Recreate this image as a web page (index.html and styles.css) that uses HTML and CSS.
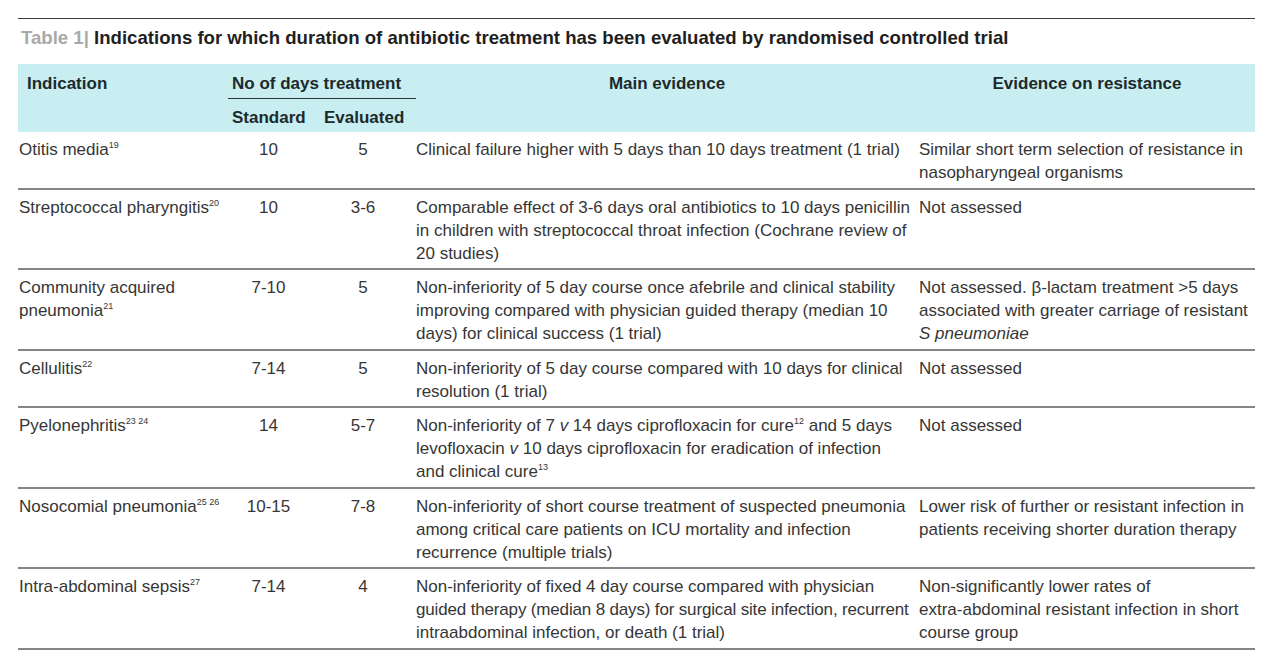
FILE: index.html
```html
<!DOCTYPE html>
<html lang="en">
<head>
<meta charset="utf-8">
<title>Table 1</title>
<link rel="stylesheet" href="styles.css">
</head>
<body>
<div class="page">
  <div class="rule"></div>
  <h1 class="caption"><span class="label">Table 1|</span> Indications for which duration of antibiotic treatment has been evaluated by randomised controlled trial</h1>
  <table class="tbl">
    <colgroup>
      <col class="c1"><col class="c2"><col class="c3"><col class="c4"><col class="c5">
    </colgroup>
    <thead>
      <tr class="h1">
        <th class="ind" rowspan="2">Indication</th>
        <th class="days" colspan="2">No of days treatment</th>
        <th class="main" rowspan="2">Main evidence</th>
        <th class="res" rowspan="2">Evidence on resistance</th>
      </tr>
      <tr class="h2">
        <th class="std">Standard</th>
        <th class="evl">Evaluated</th>
      </tr>
    </thead>
    <tbody>
      <tr>
        <td class="ind">Otitis media<sup>19</sup></td>
        <td class="std">10</td>
        <td class="evl">5</td>
        <td class="main">Clinical failure higher with 5 days than 10 days treatment (1 trial)</td>
        <td class="res">Similar short term selection of resistance in<br>nasopharyngeal organisms</td>
      </tr>
      <tr>
        <td class="ind">Streptococcal pharyngitis<sup>20</sup></td>
        <td class="std">10</td>
        <td class="evl">3-6</td>
        <td class="main">Comparable effect of 3-6 days oral antibiotics to 10 days penicillin<br>in children with streptococcal throat infection (Cochrane review of<br>20 studies)</td>
        <td class="res">Not assessed</td>
      </tr>
      <tr>
        <td class="ind">Community acquired<br>pneumonia<sup>21</sup></td>
        <td class="std">7-10</td>
        <td class="evl">5</td>
        <td class="main">Non-inferiority of 5 day course once afebrile and clinical stability<br>improving compared with physician guided therapy (median 10<br>days) for clinical success (1 trial)</td>
        <td class="res">Not assessed. β-lactam treatment &gt;5 days<br>associated with greater carriage of resistant<br><i>S pneumoniae</i></td>
      </tr>
      <tr>
        <td class="ind">Cellulitis<sup>22</sup></td>
        <td class="std">7-14</td>
        <td class="evl">5</td>
        <td class="main">Non-inferiority of 5 day course compared with 10 days for clinical<br>resolution (1 trial)</td>
        <td class="res">Not assessed</td>
      </tr>
      <tr>
        <td class="ind">Pyelonephritis<sup>23 24</sup></td>
        <td class="std">14</td>
        <td class="evl">5-7</td>
        <td class="main">Non-inferiority of 7 <i>v</i> 14 days ciprofloxacin for cure<sup>12</sup> and 5 days<br>levofloxacin <i>v</i> 10 days ciprofloxacin for eradication of infection<br>and clinical cure<sup>13</sup></td>
        <td class="res">Not assessed</td>
      </tr>
      <tr>
        <td class="ind">Nosocomial pneumonia<sup>25 26</sup></td>
        <td class="std">10-15</td>
        <td class="evl">7-8</td>
        <td class="main">Non-inferiority of short course treatment of suspected pneumonia<br>among critical care patients on ICU mortality and infection<br>recurrence (multiple trials)</td>
        <td class="res">Lower risk of further or resistant infection in<br>patients receiving shorter duration therapy</td>
      </tr>
      <tr>
        <td class="ind">Intra-abdominal sepsis<sup>27</sup></td>
        <td class="std">7-14</td>
        <td class="evl">4</td>
        <td class="main">Non-inferiority of fixed 4 day course compared with physician<br><span class="tight">guided therapy (median 8 days) for surgical site infection, recurrent</span><br>intraabdominal infection, or death (1 trial)</td>
        <td class="res">Non-significantly lower rates of<br>extra-abdominal resistant infection in short<br>course group</td>
      </tr>
    </tbody>
  </table>
</div>
</body>
</html>
```

FILE: styles.css
```css
html, body {
  margin: 0;
  padding: 0;
  background: #ffffff;
}

.page {
  padding: 18px 12px 0 18px;
  font-family: "Liberation Sans", Arial, Helvetica, sans-serif;
  color: #363636;
}

.rule {
  height: 1px;
  background: #3c3c3c;
}

.caption {
  margin: 9px 0 0 3px;
  font-size: 18.6px;
  line-height: 20px;
  font-weight: 700;
  color: #1f1f1f;
}

.caption .label {
  color: #a9a9a9;
}

.tbl {
  margin-top: 16px;
  width: 1237px;
  border-collapse: collapse;
  table-layout: fixed;
  font-size: 17px;
  line-height: 23px;
}

.c1 { width: 210px; }
.c2 { width: 87px; }
.c3 { width: 101px; }
.c4 { width: 496px; }
.c5 { width: 343px; }

.tbl thead {
  background: #c8eef2;
}

.tbl th {
  font-weight: 700;
  color: #1d2a2c;
  vertical-align: top;
  text-align: left;
  padding: 0;
  white-space: nowrap;
}

.tbl .h1 th {
  padding-top: 8px;
  padding-bottom: 3px;
}

.tbl .h2 th {
  padding-top: 7px;
  padding-bottom: 3px;
}

.tbl th.ind { padding-left: 9px; }
.tbl th.days {
  padding-left: 4px;
  border-bottom: 1px solid #2a3638;
}
.tbl th.std { padding-left: 4px; }
.tbl th.evl { padding-left: 9px; }
.tbl th.main { text-align: center; padding-left: 6px; }
.tbl th.res { text-align: center; padding-left: 7px; }

.tbl td {
  vertical-align: top;
  padding: 6px 0 3.5px 0;
  border-bottom: 2px solid #858585;
  white-space: nowrap;
}

.tbl td.ind { padding-left: 1px; }
.tbl td.std { padding-left: 4px; padding-right: 10px; text-align: center; }
.tbl td.evl { padding-left: 9px; padding-right: 14px; text-align: center; }
.tbl td.main { padding-right: 4px; }
.tbl td.res { padding-left: 7px; }

.tbl .tight {
  letter-spacing: -0.16px;
}

.tbl sup {
  font-size: 9px;
  line-height: 0;
  vertical-align: 7px;
}
```
